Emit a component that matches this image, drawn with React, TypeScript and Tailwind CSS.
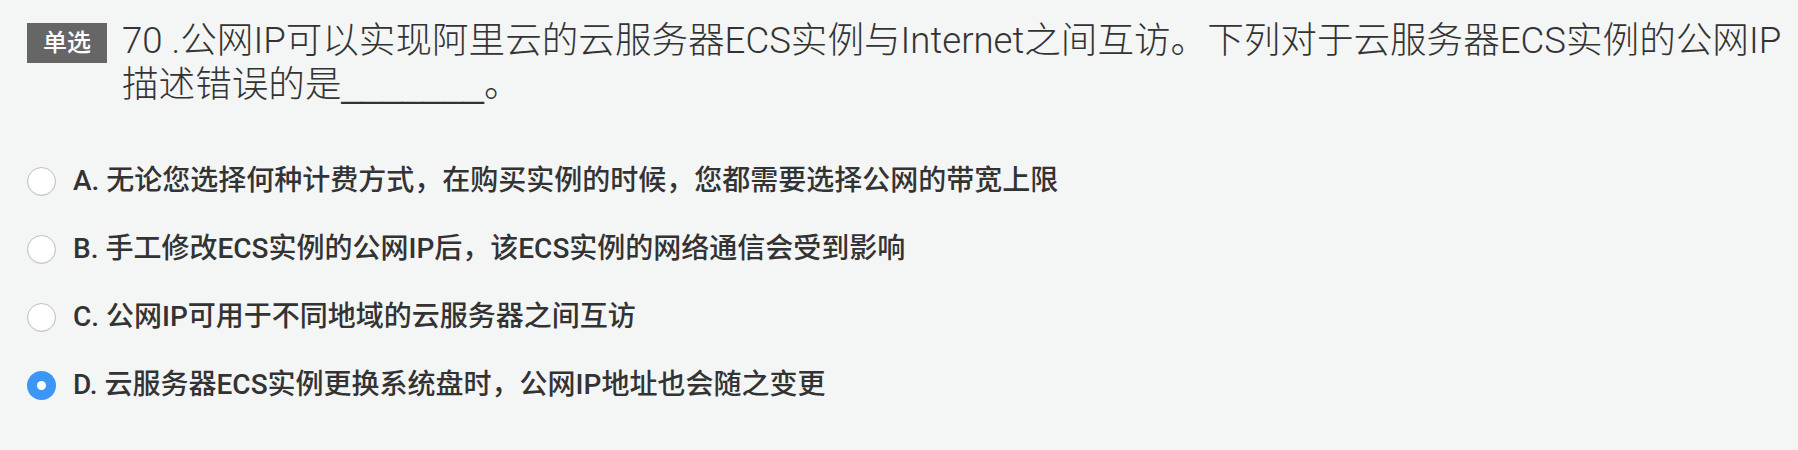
import React from 'react';

const options = [
  { key: 'A', text: '无论您选择何种计费方式，在购买实例的时候，您都需要选择公网的带宽上限' },
  { key: 'B', text: '手工修改ECS实例的公网IP后，该ECS实例的网络通信会受到影响' },
  { key: 'C', text: '公网IP可用于不同地域的云服务器之间互访' },
  { key: 'D', text: '云服务器ECS实例更换系统盘时，公网IP地址也会随之变更' },
];

export default function App() {
  const selected = 'D';

  return (
    <div className="w-[1798px] h-[450px] bg-[#f4f5f5] text-[#333] font-['Roboto','Noto_Sans_CJK_SC',sans-serif] overflow-hidden">
      <div className="pl-[27px] pt-[19px]">
        {/* question */}
        <div className="flex items-start gap-[15px]">
          <div className="mt-[4px] w-[80px] h-[40px] shrink-0 bg-[#666] text-white text-[24px] leading-[40px] text-center font-medium">
            单选
          </div>
          <p className="text-[36.6px] leading-[44px] font-light text-[#333]">
            70 .公网IP可以实现阿里云的云服务器ECS实例与Internet之间互访。下列对于云服务器ECS实例的公网IP
            <br />
            描述错误的是<span className="font-['Liberation_Sans',sans-serif]">_______</span>。
          </p>
        </div>

        {/* options */}
        <div className="mt-[40px] flex flex-col">
          {options.map((o) => (
            <label key={o.key} className="h-[68px] flex items-center gap-[17px] cursor-pointer">
              {o.key === selected ? (
                <span className="w-[29px] h-[29px] rounded-full bg-[#3d95f5] flex items-center justify-center shrink-0">
                  <span className="w-[9px] h-[9px] rounded-full bg-white" />
                </span>
              ) : (
                <span className="w-[29px] h-[29px] rounded-full bg-white border border-[#bdbdbd] shadow-[inset_0_-1px_1px_rgba(0,0,0,0.08)] shrink-0" />
              )}
              <span className="text-[28px] font-medium text-[#333]">
                {o.key}. {o.text}
              </span>
            </label>
          ))}
        </div>
      </div>
    </div>
  );
}
